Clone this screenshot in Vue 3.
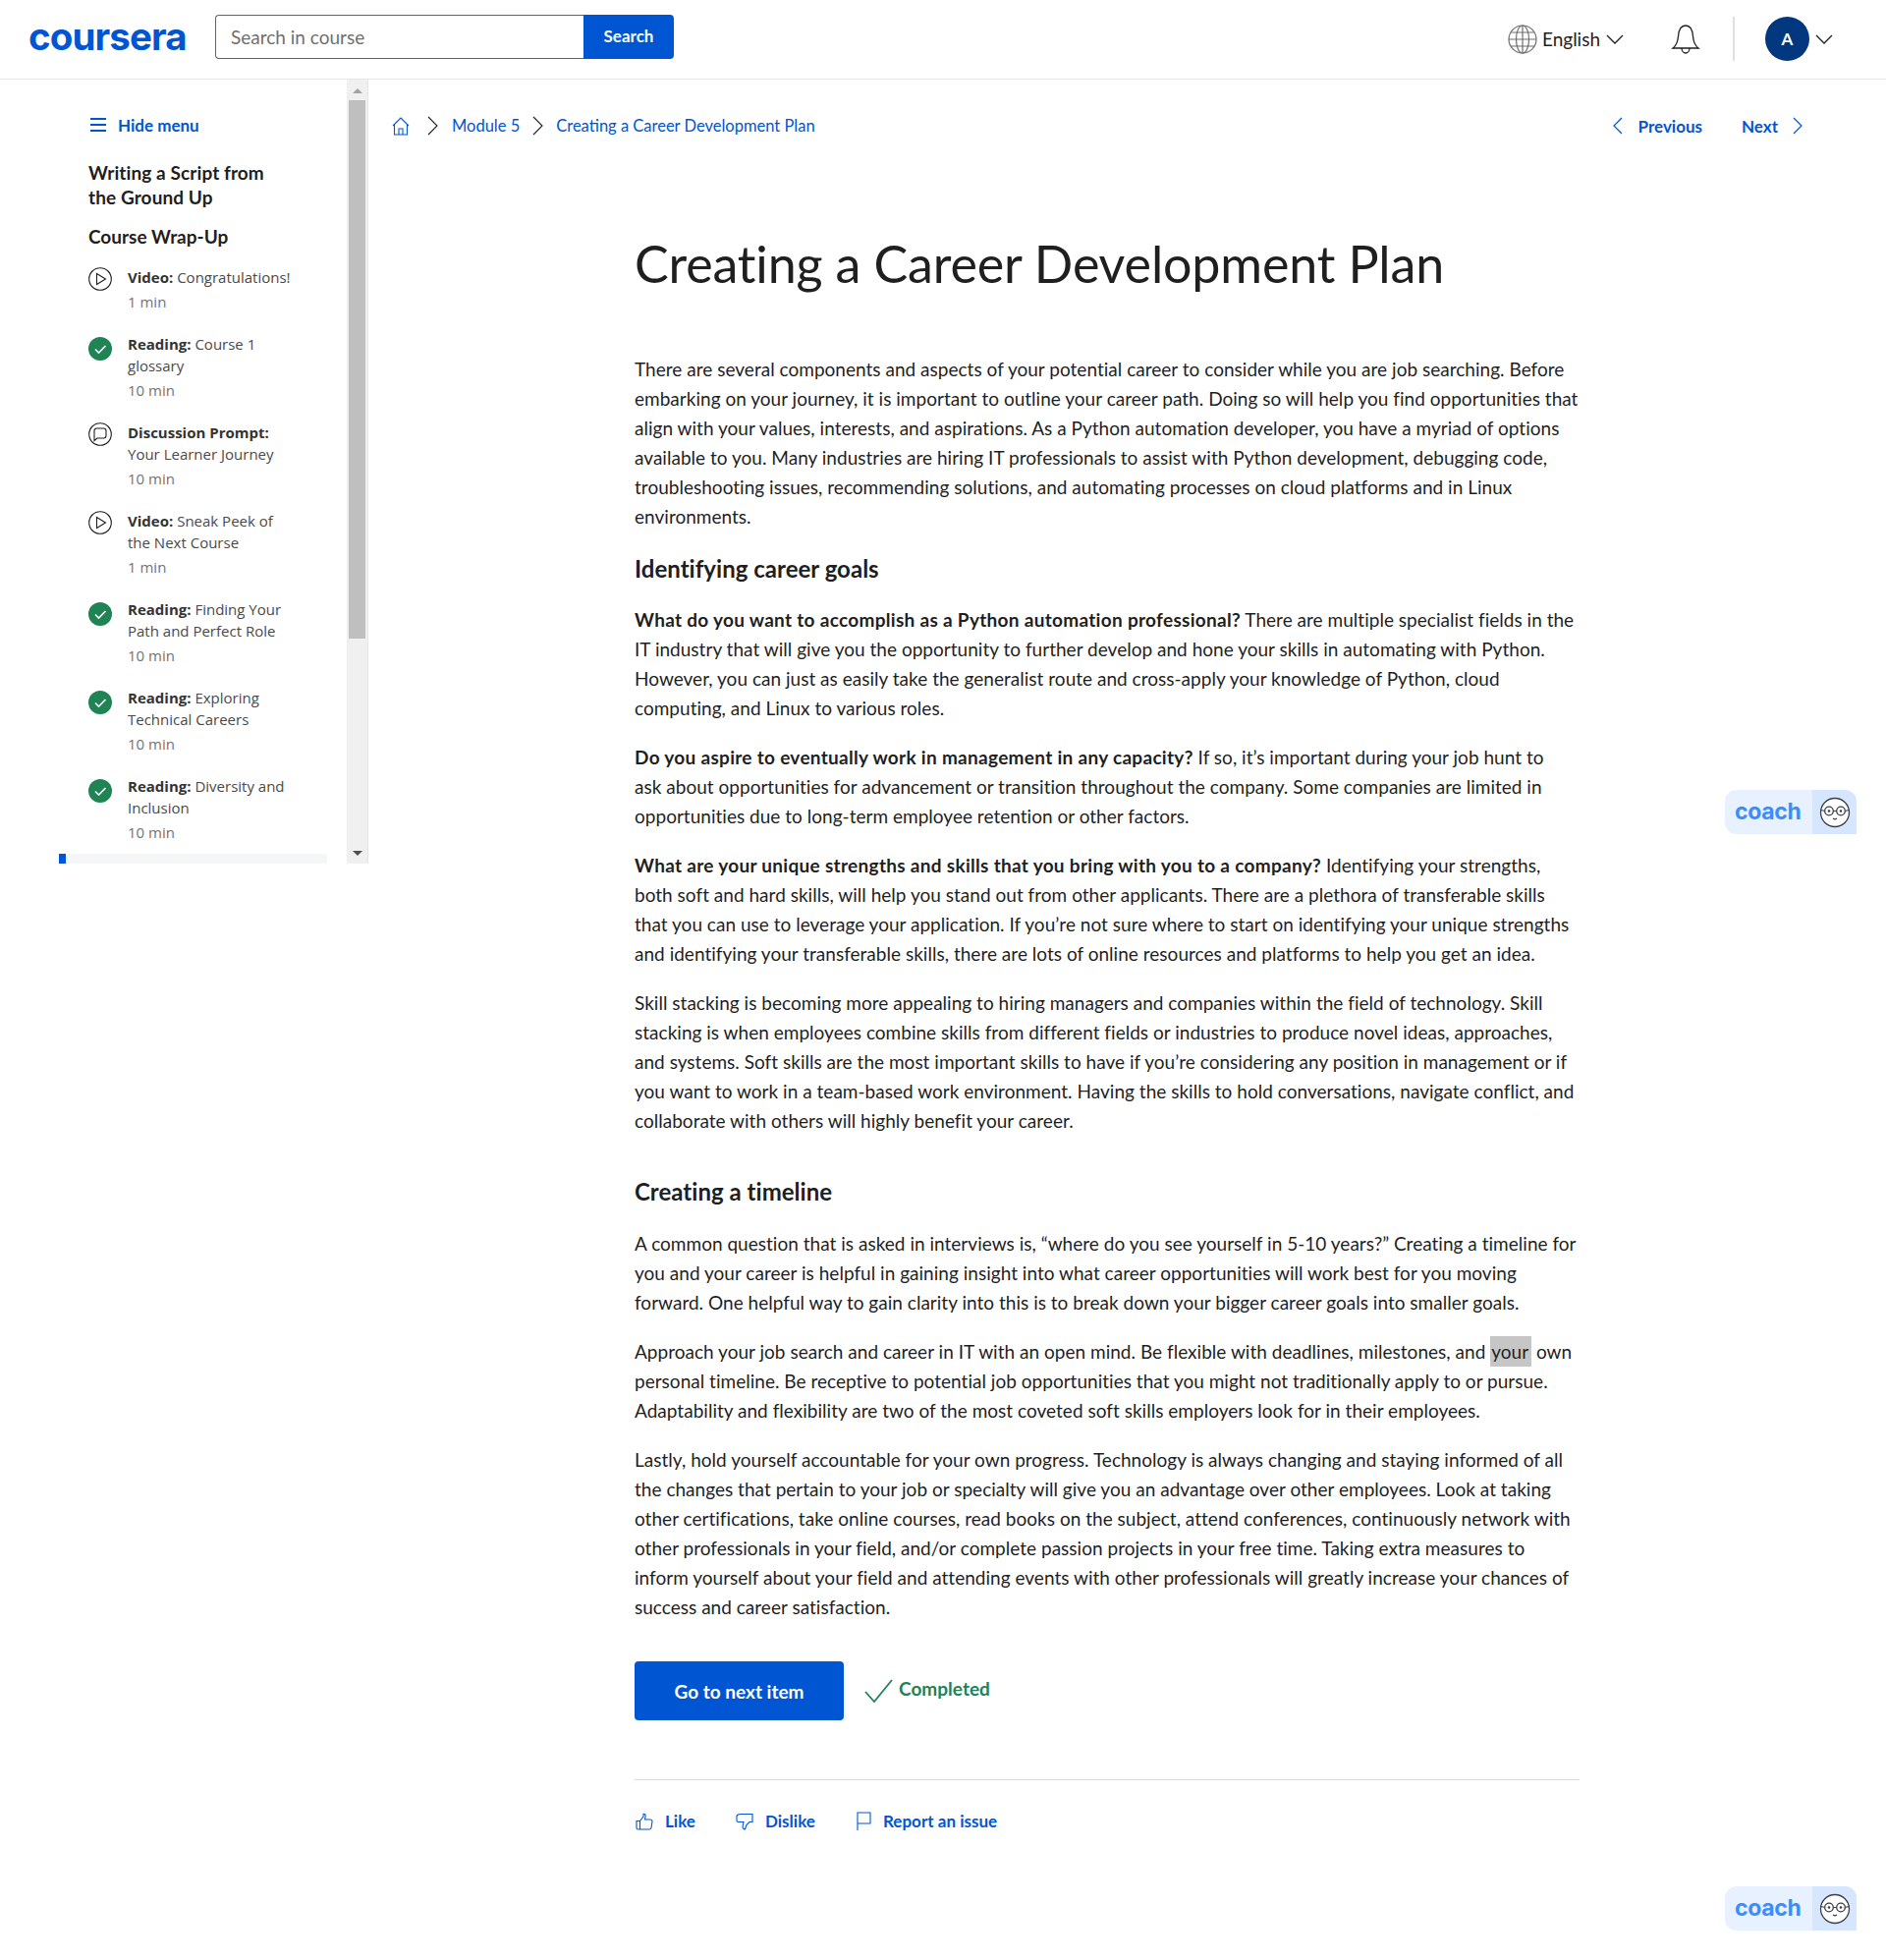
<template>
  <div class="page">
    <header class="topbar">
      <div class="logo">coursera</div>
      <form class="search" @submit.prevent>
        <input class="search-input" placeholder="Search in course" />
        <button class="search-btn">Search</button>
      </form>
      <div class="topbar-right">
        <svg class="globe" width="30" height="30" viewBox="0 0 30 30" fill="none" stroke="#6f6f6f" stroke-width="1.2">
          <circle cx="15" cy="15" r="14" />
          <ellipse cx="15" cy="15" rx="6.5" ry="14" />
          <path d="M15 1v28M1 15h28M3 8h24M3 22h24" />
        </svg>
        <span class="lang">English</span>
        <svg class="chev-down" width="18" height="10" viewBox="0 0 18 10" fill="none" stroke="#1f1f1f" stroke-width="1.3"><path d="M1 1l8 8 8-8" /></svg>
        <svg class="bell" width="30" height="32" viewBox="0 0 30 32" fill="none" stroke="#1f1f1f" stroke-width="1.3">
          <path d="M2 25c4-3 5-6 5.500-12C8 6 11 2 15 2s7 4 7.500 11c.5 6 1.500 9 5.500 12z" />
          <path d="M11 25c0 3 2 5 4 5s4-2 4-5" />
        </svg>
        <span class="divider"></span>
        <span class="avatar">A</span>
        <svg class="chev-down" width="18" height="10" viewBox="0 0 18 10" fill="none" stroke="#1f1f1f" stroke-width="1.3"><path d="M1 1l8 8 8-8" /></svg>
      </div>
    </header>

    <div class="body">
      <aside class="sidebar">
        <div class="side-col">
          <div class="side-scroll">
            <div class="hide-menu">
              <svg width="16" height="16" viewBox="0 0 16 16" fill="#0056d2"><path d="M0 1h16v2H0zM0 7h16v2H0zM0 13h16v2H0z" /></svg>
              <span>Hide menu</span>
            </div>
            <div class="side-title">Writing a Script from<br />the Ground Up</div>
            <div class="side-section">Course Wrap-Up</div>
            <ul class="items">
              <li v-for="item in items" :key="item.label + item.lines[0]" class="item">
                <svg v-if="item.icon === 'play'" class="item-icon" width="24" height="24" viewBox="0 0 24 24" fill="none" stroke="#1f1f1f" stroke-width="1.1">
                  <circle cx="12" cy="12" r="11.300" />
                  <path d="M8.500 6.500v11l9-5.500z" />
                </svg>
                <svg v-else-if="item.icon === 'chat'" class="item-icon" width="24" height="24" viewBox="0 0 24 24" fill="none" stroke="#1f1f1f" stroke-width="1.1">
                  <circle cx="12" cy="12" r="11.300" />
                  <path d="M8.500 6h7a2.500 2.500 0 0 1 2.500 2.500v5a2.500 2.500 0 0 1-2.500 2.500H9l-3 2.500V8.500A2.500 2.500 0 0 1 8.500 6z" />
                </svg>
                <svg v-else class="item-icon done" width="24" height="24" viewBox="0 0 24 24" fill="none">
                  <circle cx="12" cy="12" r="12" fill="#1f8354" />
                  <path d="M7 12.500l3.500 3.500 7-7" stroke="#fff" stroke-width="1.600" />
                </svg>
                <div class="item-text">
                  <div class="item-name"><b>{{ item.label }}:</b> <template v-for="(line, i) in item.lines" :key="i"><br v-if="i" />{{ line }}</template></div>
                  <div class="item-time">{{ item.time }}</div>
                </div>
              </li>
            </ul>
          </div>
          <div class="hbar"><div class="hbar-thumb"></div></div>
        </div>
        <div class="vbar">
          <span class="arrow-up"></span>
          <div class="vbar-thumb"></div>
          <span class="arrow-down"></span>
        </div>
      </aside>

      <main class="main">
        <nav class="crumbs">
          <div class="crumb-left">
            <svg width="18" height="19" viewBox="0 0 18 19" fill="none" stroke="#0056d2" stroke-width="1.100">
              <path d="M1 9l8-8 8 8M2.500 7.500V18h13V7.500M7 18v-6h4v6" />
            </svg>
            <svg class="chev" width="11" height="20" viewBox="0 0 11 20" fill="none" stroke="#1f1f1f" stroke-width="1.100"><path d="M1 1l9 9-9 9" /></svg>
            <a class="crumb">Module 5</a>
            <svg class="chev" width="11" height="20" viewBox="0 0 11 20" fill="none" stroke="#1f1f1f" stroke-width="1.100"><path d="M1 1l9 9-9 9" /></svg>
            <a class="crumb">Creating a Career Development Plan</a>
          </div>
          <div class="pager">
            <svg width="11" height="18" viewBox="0 0 11 18" fill="none" stroke="#0056d2" stroke-width="1.200"><path d="M10 1L2 9l8 8" /></svg>
            <a class="pager-link prev">Previous</a>
            <a class="pager-link next">Next</a>
            <svg width="11" height="18" viewBox="0 0 11 18" fill="none" stroke="#0056d2" stroke-width="1.200"><path d="M1 1l8 8-8 8" /></svg>
          </div>
        </nav>

        <article class="article">
          <h1>Creating a Career Development Plan</h1>

          <p class="first">
            There are several components and aspects of your potential career to consider while you are job searching. Before<br />
            embarking on your journey, it is important to outline your career path. Doing so will help you find opportunities that<br />
            align with your values, interests, and aspirations. As a Python automation developer, you have a myriad of options<br />
            available to you. Many industries are hiring IT professionals to assist with Python development, debugging code,<br />
            troubleshooting issues, recommending solutions, and automating processes on cloud platforms and in Linux<br />
            environments.
          </p>

          <h2>Identifying career goals</h2>
          <p>
            <b>What do you want to accomplish as a Python automation professional?</b> There are multiple specialist fields in the<br />
            IT industry that will give you the opportunity to further develop and hone your skills in automating with Python.<br />
            However, you can just as easily take the generalist route and cross-apply your knowledge of Python, cloud<br />
            computing, and Linux to various roles.
          </p>
          <p>
            <b>Do you aspire to eventually work in management in any capacity?</b> If so, it’s important during your job hunt to<br />
            ask about opportunities for advancement or transition throughout the company. Some companies are limited in<br />
            opportunities due to long-term employee retention or other factors.
          </p>
          <p>
            <b>What are your unique strengths and skills that you bring with you to a company?</b> Identifying your strengths,<br />
            both soft and hard skills, will help you stand out from other applicants. There are a plethora of transferable skills<br />
            that you can use to leverage your application. If you’re not sure where to start on identifying your unique strengths<br />
            and identifying your transferable skills, there are lots of online resources and platforms to help you get an idea.
          </p>
          <p>
            Skill stacking is becoming more appealing to hiring managers and companies within the field of technology. Skill<br />
            stacking is when employees combine skills from different fields or industries to produce novel ideas, approaches,<br />
            and systems. Soft skills are the most important skills to have if you’re considering any position in management or if<br />
            you want to work in a team-based work environment. Having the skills to hold conversations, navigate conflict, and<br />
            collaborate with others will highly benefit your career.
          </p>

          <h2 class="timeline">Creating a timeline</h2>
          <p class="after-timeline">
            A common question that is asked in interviews is, “where do you see yourself in 5-10 years?” Creating a timeline for<br />
            you and your career is helpful in gaining insight into what career opportunities will work best for you moving<br />
            forward. One helpful way to gain clarity into this is to break down your bigger career goals into smaller goals.
          </p>
          <p>
            Approach your job search and career in IT with an open mind. Be flexible with deadlines, milestones, and <mark>your</mark> own<br />
            personal timeline. Be receptive to potential job opportunities that you might not traditionally apply to or pursue.<br />
            Adaptability and flexibility are two of the most coveted soft skills employers look for in their employees.
          </p>
          <p>
            Lastly, hold yourself accountable for your own progress. Technology is always changing and staying informed of all<br />
            the changes that pertain to your job or specialty will give you an advantage over other employees. Look at taking<br />
            other certifications, take online courses, read books on the subject, attend conferences, continuously network with<br />
            other professionals in your field, and/or complete passion projects in your free time. Taking extra measures to<br />
            inform yourself about your field and attending events with other professionals will greatly increase your chances of<br />
            success and career satisfaction.
          </p>

          <div class="actions">
            <button class="next-btn">Go to next item</button>
            <svg width="29" height="24" viewBox="0 0 29 24" fill="none" stroke="#1f8354" stroke-width="1.800"><path d="M1 13l9 10L28 1" /></svg>
            <span class="completed">Completed</span>
          </div>

          <div class="feedback">
            <a class="fb like">
              <svg width="18" height="18" viewBox="0 0 18 18" fill="none" stroke="#0056d2" stroke-width="1.100">
                <path d="M1 8.500h3.500V17H2.500A1.500 1.500 0 0 1 1 15.500zM4.500 8.500L8 4V1.500c2-.5 2.500 1.500 2 3L9.500 7h5.500c1.500 0 2 1 2 2l-1 6.500c-.2 1-1 1.500-2 1.500H4.500" />
              </svg>
              Like
            </a>
            <a class="fb dislike">
              <svg width="18" height="18" viewBox="0 0 18 18" fill="none" stroke="#0056d2" stroke-width="1.100">
                <path d="M17 1.500H5C3 1.500 1.500 2 1 3.500V8c0 1 .7 1.500 1.500 1.500H8L7 14c-.2 2 1.500 3 2.500 3L11 12.500l3-3h3z" />
              </svg>
              Dislike
            </a>
            <a class="fb report">
              <svg width="15" height="19" viewBox="0 0 15 19" fill="none" stroke="#0056d2" stroke-width="1.100"><path d="M1 19V1h13v11H1" /></svg>
              Report an issue
            </a>
          </div>
        </article>
      </main>
    </div>

    <div v-for="top in [804, 1920]" :key="top" class="coach" :style="{ top: top + 'px' }">
      <span class="coach-word">coach</span>
      <span class="coach-face">
        <svg width="32" height="32" viewBox="0 0 32 32" fill="none" stroke="#3b3f4a">
          <circle cx="16" cy="16" r="14.500" fill="#fff" stroke-width="1.300" />
          <circle cx="10" cy="14.500" r="4.300" stroke-width="1.300" />
          <circle cx="22" cy="14.500" r="4.300" stroke-width="1.300" />
          <path d="M14.300 14.500h3.400M1.800 13.500l3.900 1M30.200 13.500l-3.900 1M14 22c1.200 1 2.800 1 4 0" stroke-width="1.100" />
          <circle cx="10" cy="14.500" r="1.300" fill="#3b3f4a" stroke="none" />
          <circle cx="22" cy="14.500" r="1.300" fill="#3b3f4a" stroke="none" />
        </svg>
      </span>
    </div>
  </div>
</template>

<script setup>
const items = [
  { icon: 'play', label: 'Video', lines: ['Congratulations!'], time: '1 min' },
  { icon: 'done', label: 'Reading', lines: ['Course 1', 'glossary'], time: '10 min' },
  { icon: 'chat', label: 'Discussion Prompt', lines: ['', 'Your Learner Journey'], time: '10 min' },
  { icon: 'play', label: 'Video', lines: ['Sneak Peek of', 'the Next Course'], time: '1 min' },
  { icon: 'done', label: 'Reading', lines: ['Finding Your', 'Path and Perfect Role'], time: '10 min' },
  { icon: 'done', label: 'Reading', lines: ['Exploring', 'Technical Careers'], time: '10 min' },
  { icon: 'done', label: 'Reading', lines: ['Diversity and', 'Inclusion'], time: '10 min' }
]
</script>

<style>
body {
  margin: 0;
  background: #fff;
}
</style>

<style scoped>
.page {
  position: relative;
  width: 1920px;
  height: 1995px;
  overflow: hidden;
  font-family: Lato, "Liberation Sans", sans-serif;
  color: #1f1f1f;
}

a {
  color: #0056d2;
}

.topbar {
  display: flex;
  align-items: center;
  height: 80px;
  padding: 0 54px 0 29px;
  border-bottom: 1px solid #e5e5e5;
  box-sizing: content-box;
}

.logo {
  width: 190px;
  margin-top: -6px;
  font-family: Inter, sans-serif;
  font-weight: 700;
  font-size: 38.5px;
  letter-spacing: -0.9px;
  color: #0056d2;
}

.search {
  display: flex;
  height: 45px;
  margin-top: -6px;
}

.search-input {
  width: 375px;
  box-sizing: border-box;
  padding: 0 15px;
  border: 1px solid #636363;
  border-right: 0;
  border-radius: 4px 0 0 4px;
  font: 19px Lato, sans-serif;
  outline: none;
}

.search-input::placeholder {
  color: #6f6f6f;
}

.search-btn {
  width: 92px;
  border: 0;
  border-radius: 0 4px 4px 0;
  background: #0056d2;
  color: #fff;
  font: 700 17px Lato, sans-serif;
  padding-bottom: 2px;
}

.topbar-right {
  display: flex;
  align-items: center;
  margin-left: auto;
  margin-top: -1px;
}

.lang {
  margin-left: 5px;
  font-size: 19px;
}

.topbar-right .chev-down {
  margin-left: 6px;
}

.bell {
  margin-left: 48px;
}

.divider {
  width: 2px;
  height: 45px;
  margin-left: 33px;
  background: #e0e0e0;
}

.avatar {
  display: flex;
  align-items: center;
  justify-content: center;
  width: 45px;
  height: 45px;
  margin-left: 31px;
  border-radius: 50%;
  background: #00377f;
  color: #fff;
  font-weight: 700;
  font-size: 17px;
}

.body {
  display: flex;
}

.sidebar {
  display: flex;
  flex: none;
  width: 375px;
  height: 798px;
}

.side-col {
  display: flex;
  flex-direction: column;
  width: 353px;
}

.side-scroll {
  flex: 1;
  min-height: 0;
  overflow: hidden;
  padding: 34px 0 0 90px;
  box-sizing: border-box;
}

.hide-menu {
  display: flex;
  align-items: center;
  gap: 12px;
  height: 24px;
  margin-left: 2px;
  color: #0056d2;
  font-weight: 700;
  font-size: 17px;
}

.side-title,
.side-section {
  font-weight: 700;
  font-size: 19px;
  line-height: 25px;
}

.side-title {
  margin-top: 24px;
  letter-spacing: 0.1px;
}

.side-section {
  margin-top: 15px;
}

.items {
  margin: 18px 0 0;
  padding: 0;
  list-style: none;
}

.item {
  display: flex;
  gap: 16px;
  margin-bottom: 21px;
}

.item-icon {
  flex: none;
  margin-top: 1px;
}

.item-icon.done {
  margin-top: 4px;
}

.item-text {
  font-family: "Open Sans", sans-serif;
  font-size: 15px;
  line-height: 22px;
  color: #4a4a4a;
}

.item-name b {
  font-weight: 700;
  color: #333;
}

.item-time {
  margin-top: 3px;
  color: #737373;
}

.hbar {
  flex: none;
  width: 273px;
  height: 10px;
  margin: 0 0 0 60px;
  background: #f5f6f8;
}

.hbar-thumb {
  width: 7px;
  height: 10px;
  background: #0056d2;
}

.vbar {
  display: flex;
  flex: none;
  flex-direction: column;
  align-items: center;
  width: 22px;
  border-right: 1px solid #e5e5e5;
  box-sizing: border-box;
  background: #f0f0f0;
}

.arrow-up,
.arrow-down {
  width: 0;
  height: 0;
  border-left: 5px solid transparent;
  border-right: 5px solid transparent;
}

.arrow-up {
  margin: 9px 0 7px;
  border-bottom: 5px solid #a3a3a3;
}

.arrow-down {
  margin-top: auto;
  margin-bottom: 8px;
  border-top: 5px solid #505050;
}

.vbar-thumb {
  width: 17px;
  height: 548px;
  background: #bfbfbf;
}

.main {
  flex: 1;
  min-width: 0;
}

.crumbs {
  display: flex;
  align-items: center;
  justify-content: space-between;
  height: 24px;
  padding: 35px 84px 0 24px;
  font-size: 16.5px;
}

.crumb-left {
  display: flex;
  align-items: center;
}

.chev {
  margin: 0 14px 0 18px;
}

.crumb + .chev {
  margin: 0 13px;
}

.pager {
  display: flex;
  align-items: center;
  font-size: 17px;
}

.pager-link {
  font-weight: 700;
}

.prev {
  margin: 0 40px 0 16px;
}

.next {
  margin-right: 15px;
}

.article {
  width: 962px;
  margin-left: 271px;
  font-size: 19px;
  line-height: 30px;
  letter-spacing: 0.02px;
}

h1 {
  margin: 93px 0 0;
  font-size: 52px;
  font-weight: 400;
  line-height: 70px;
  letter-spacing: -0.15px;
}

h2 {
  margin: 0;
  font-size: 24px;
  font-weight: 700;
  line-height: 32px;
}

p {
  margin: 0 0 20px;
  white-space: nowrap;
}

p.first {
  margin: 58px 0 22px;
}

p b {
  font-weight: 700;
  letter-spacing: 0.3px;
}

h2 + p {
  margin-top: 21px;
}

h2.timeline {
  margin-top: 41px;
}

h2 + p.after-timeline {
  margin-top: 22px;
}

mark {
  padding: 4px 3px 4px 1px;
  background: #c6c6c6;
  color: inherit;
}

.actions {
  display: flex;
  align-items: center;
  margin-top: 40px;
}

.next-btn {
  width: 213px;
  height: 60px;
  margin-right: 21px;
  border: 0;
  border-radius: 4px;
  background: #0056d2;
  color: #fff;
  font: 700 19px Lato, sans-serif;
}

.completed {
  margin: -4px 0 0 6px;
  color: #1f8354;
  font-weight: 700;
  font-size: 19px;
}

.feedback {
  display: flex;
  align-items: center;
  height: 83px;
  margin-top: 60px;
  border-top: 1px solid #dcdcdc;
  font-size: 17px;
  font-weight: 700;
}

.fb {
  display: flex;
  align-items: center;
  margin-left: 1px;
}

.fb svg {
  margin-right: 12px;
}

.dislike {
  margin-left: 41px;
}

.report {
  margin-left: 42px;
}

.coach {
  position: absolute;
  left: 1756px;
  display: flex;
  width: 134px;
  height: 45px;
  overflow: hidden;
  border-radius: 12px 12px 0 12px;
  background: #e8f1ff;
}

.coach-word {
  width: 89px;
  padding-left: 10px;
  box-sizing: border-box;
  font-family: Inter, sans-serif;
  font-weight: 700;
  font-size: 23px;
  line-height: 44px;
  letter-spacing: -0.3px;
  color: #3b8dff;
}

.coach-face {
  display: flex;
  flex: 1;
  align-items: center;
  justify-content: center;
  background: #d6e6ff;
}
</style>
